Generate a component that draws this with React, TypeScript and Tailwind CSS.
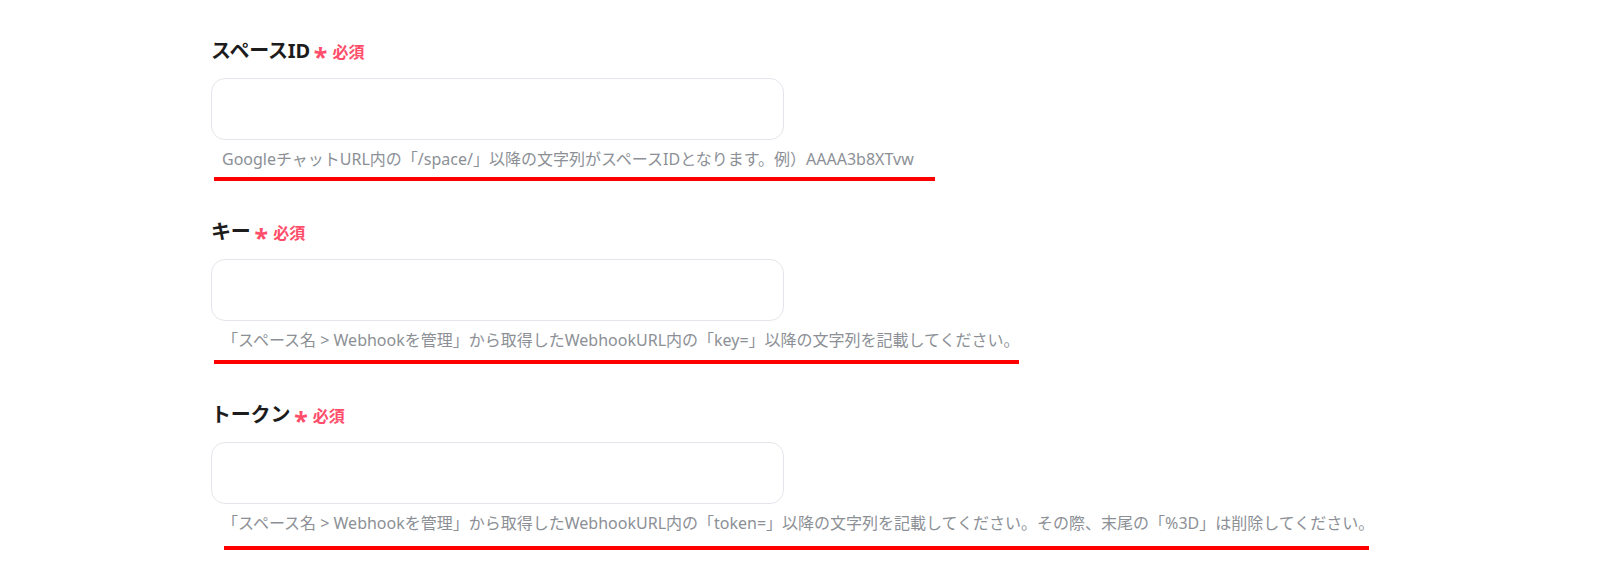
import React from "react";

type Field = {
  label: string;
  help: string;
  lineMt: string;
  lineMl: string;
  lineW: string;
};

const fields: Field[] = [
  {
    label: "スペースID",
    help: "GoogleチャットURL内の「/space/」以降の文字列がスペースIDとなります。例）AAAA3b8XTvw",
    lineMt: "mt-[7px]",
    lineMl: "ml-[3px]",
    lineW: "w-[721px]",
  },
  {
    label: "キー",
    help: "「スペース名 > Webhookを管理」から取得したWebhookURL内の「key=」以降の文字列を記載してください。",
    lineMt: "mt-[9px]",
    lineMl: "ml-[3px]",
    lineW: "w-[805px]",
  },
  {
    label: "トークン",
    help: "「スペース名 > Webhookを管理」から取得したWebhookURL内の「token=」以降の文字列を記載してください。その際、末尾の「%3D」は削除してください。",
    lineMt: "mt-[12px]",
    lineMl: "ml-[13px]",
    lineW: "w-[1145px]",
  },
];

export default function App() {
  return (
    <div
      className="w-[1600px] h-[577px] bg-white overflow-hidden pl-[211px] pt-[37px]"
      style={{ fontFamily: '"Noto Sans", "Noto Sans CJK JP", sans-serif' }}
    >
      <div className="flex flex-col gap-[37px]">
        {fields.map((f) => (
          <div key={f.label} className="flex flex-col">
            <div className="flex items-center h-[28px]">
              <span className="text-[20px] font-bold text-[#1c1c1c] tracking-[-0.2px]">
                {f.label}
              </span>
              <span className="ml-[4px] text-[25px] leading-none font-bold text-[#ff4d6a] translate-y-[5px]">
                *
              </span>
              <span className="ml-[5px] text-[16px] font-bold text-[#ff4d6a] translate-y-[1px]">
                必須
              </span>
            </div>
            <div className="mt-[13px] w-[573px] h-[62px] rounded-[14px] border border-[#e3e6eb] bg-white" />
            <p className="mt-[8px] pl-[11px] text-[16px] leading-[22px] text-[#8c9096] whitespace-nowrap">
              {f.help}
            </p>
            <div className={`${f.lineMt} ${f.lineMl} ${f.lineW} h-[4px] bg-[#ff0000]`} />
          </div>
        ))}
      </div>
    </div>
  );
}
